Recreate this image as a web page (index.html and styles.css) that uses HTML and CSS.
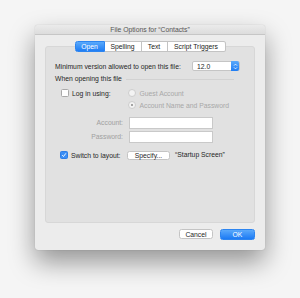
FILE: index.html
```html
<!DOCTYPE html>
<html lang="en">
<head>
    <meta charset="UTF-8">
    <title>File Options</title>
    <link rel="stylesheet" href="styles.css">
</head>
<body>
    <div class="window">
        <div class="titlebar">File Options for “Contacts”</div>
        <div class="content">
            <div class="panel">
                <div class="tabs">
                    <span class="tab active open">Open</span>
                    <span class="tab spelling">Spelling</span>
                    <span class="tab text">Text</span>
                    <span class="tab triggers">Script Triggers</span>
                </div>

                <div class="row version-row">
                    <span>Minimum version allowed to open this file:</span>
                    <div class="popup">
                        <span>12.0</span>
                        <span class="stepper">
                            <svg width="5" height="7" viewBox="0 0 5 7"><path d="M1 2.6 L2.5 1.1 L4 2.6 M1 4.4 L2.5 5.9 L4 4.4" fill="none" stroke="#fff" stroke-width="0.8"/></svg>
                        </span>
                    </div>
                </div>

                <div class="row section-row">
                    <span>When opening this file</span>
                    <span class="rule"></span>
                </div>

                <div class="row login-row">
                    <div class="lead">
                        <span class="check"></span>
                        <span>Log in using:</span>
                    </div>
                    <span class="radio"></span>
                    <span class="muted">Guest Account</span>
                </div>

                <div class="row radio-row">
                    <span class="radio on"></span>
                    <span class="muted">Account Name and Password</span>
                </div>

                <div class="row field-row account-row">
                    <span class="label">Account:</span>
                    <span class="field"></span>
                </div>
                <div class="row field-row password-row">
                    <span class="label">Password:</span>
                    <span class="field"></span>
                </div>

                <div class="row switch-row">
                    <div class="lead">
                        <span class="check checked">
                            <svg width="6" height="6" viewBox="0 0 6 6"><path d="M1.2 3.1 L2.5 4.5 L4.9 1.3" fill="none" stroke="#fff" stroke-width="0.9"/></svg>
                        </span>
                        <span>Switch to layout:</span>
                    </div>
                    <span class="button specify">Specify...</span>
                    <span class="layout-name">“Startup Screen”</span>
                </div>
            </div>

            <div class="actions">
                <span class="button cancel">Cancel</span>
                <span class="button ok">OK</span>
            </div>
        </div>
    </div>
</body>
</html>
```

FILE: styles.css
```css
body {
    margin: 0;
    padding: 25px 0 0 35px;
    background: #f5f5f5;
    font-family: "Liberation Sans", Arial, sans-serif;
    font-size: 6.8px;
    color: #262626;
    height: 298px;
    box-sizing: border-box;
    overflow: hidden;
}
.window {
    width: 230px;
    height: 225px;
    background: #ececec;
    border-radius: 3px;
    box-shadow: 0 12px 26px rgba(0, 0, 0, 0.4), 0 0 1px rgba(0, 0, 0, 0.3);
    display: flex;
    flex-direction: column;
}
.titlebar {
    height: 9px;
    line-height: 9px;
    text-align: center;
    color: #555;
    background: linear-gradient(#ebebeb, #dcdcdc);
    border-bottom: 1px solid #c6c6c6;
    border-radius: 3px 3px 0 0;
}
.content {
    padding: 11px 10px 0 10px;
}
.panel {
    height: 175px;
    background: #e1e1e1;
    border: 1px solid #d7d7d7;
    border-radius: 3px;
    padding: 0 9px;
}
.tabs {
    display: flex;
    justify-content: center;
    margin-top: -6px;
    height: 11px;
}
.tab {
    background: #fff;
    border: 1px solid #c3c3c3;
    border-left: none;
    line-height: 9px;
    text-align: center;
    color: #222;
}
.tab:first-child {
    border-left: 1px solid #c3c3c3;
    border-radius: 2.5px 0 0 2.5px;
}
.tab:last-child {
    border-radius: 0 2.5px 2.5px 0;
}
.tab.active {
    background: linear-gradient(#5aa9fb, #1f7df4);
    border-color: #2d85f0;
    color: #fff;
}
.open { width: 28px; }
.spelling { width: 36px; }
.text { width: 25px; }
.triggers { width: 57px; }
.row {
    display: flex;
    align-items: center;
}
.version-row {
    margin-top: 9px;
    height: 10px;
    justify-content: space-between;
    padding-right: 5px;
}
.popup {
    width: 48px;
    height: 9.5px;
    background: #fff;
    border: 0.5px solid #c5c5c5;
    border-radius: 2px;
    display: flex;
    align-items: center;
    justify-content: space-between;
    padding-left: 4px;
    box-sizing: border-box;
}
.stepper {
    width: 8px;
    height: 9.5px;
    background: linear-gradient(#5aa9fb, #1f7df4);
    border-radius: 0 2px 2px 0;
    display: flex;
    align-items: center;
    justify-content: center;
}
.section-row {
    margin-top: 3px;
    height: 8px;
}
.rule {
    flex: 1;
    height: 1px;
    background: #d2d2d2;
    margin: 2px 11px 0 4px;
}
.login-row {
    margin-top: 7px;
    height: 8px;
}
.lead {
    width: 73px;
    display: flex;
    align-items: center;
    padding-left: 6px;
    box-sizing: border-box;
}
.check {
    width: 6px;
    height: 6px;
    background: #fff;
    border: 0.5px solid #a9a9a9;
    border-radius: 1.5px;
    margin-right: 3px;
    display: flex;
    align-items: center;
    justify-content: center;
}
.check.checked {
    background: #3b8ef4;
    border-color: #2f7ee6;
}
.radio {
    width: 6px;
    height: 6px;
    border-radius: 50%;
    background: #f3f3f3;
    border: 0.5px solid #cdcdcd;
    margin-right: 3.5px;
    position: relative;
}
.radio.on::after {
    content: "";
    position: absolute;
    left: 2px;
    top: 2px;
    width: 2px;
    height: 2px;
    border-radius: 50%;
    background: #8a8a8a;
}
.muted {
    color: #a8a8a8;
}
.radio-row {
    margin-top: 4px;
    height: 8px;
    padding-left: 73px;
}
.field-row {
    height: 10.5px;
}
.account-row {
    margin-top: 8.5px;
}
.password-row {
    margin-top: 3.5px;
}
.label {
    width: 68px;
    text-align: right;
    color: #a0a0a0;
    margin-right: 6px;
}
.field {
    width: 82px;
    height: 10px;
    background: #fff;
    border: 0.5px solid #c9c9c9;
}
.switch-row {
    margin-top: 8.5px;
    height: 9px;
}
.switch-row .lead {
    padding-left: 5px;
    width: 72px;
}
.button {
    display: flex;
    align-items: center;
    justify-content: center;
    background: #fff;
    border: 0.5px solid #c4c4c4;
    border-radius: 2.5px;
    box-sizing: border-box;
}
.specify {
    width: 43px;
    height: 9px;
}
.layout-name {
    margin-left: 5px;
    margin-top: -1px;
}
.actions {
    display: flex;
    justify-content: flex-end;
    gap: 7px;
    margin-top: 6px;
}
.cancel {
    width: 34px;
    height: 10px;
}
.ok {
    width: 35px;
    height: 11px;
    color: #fff;
    background: linear-gradient(#5aa9fb, #1c7af4);
    border-color: #2d85f0;
}
```
